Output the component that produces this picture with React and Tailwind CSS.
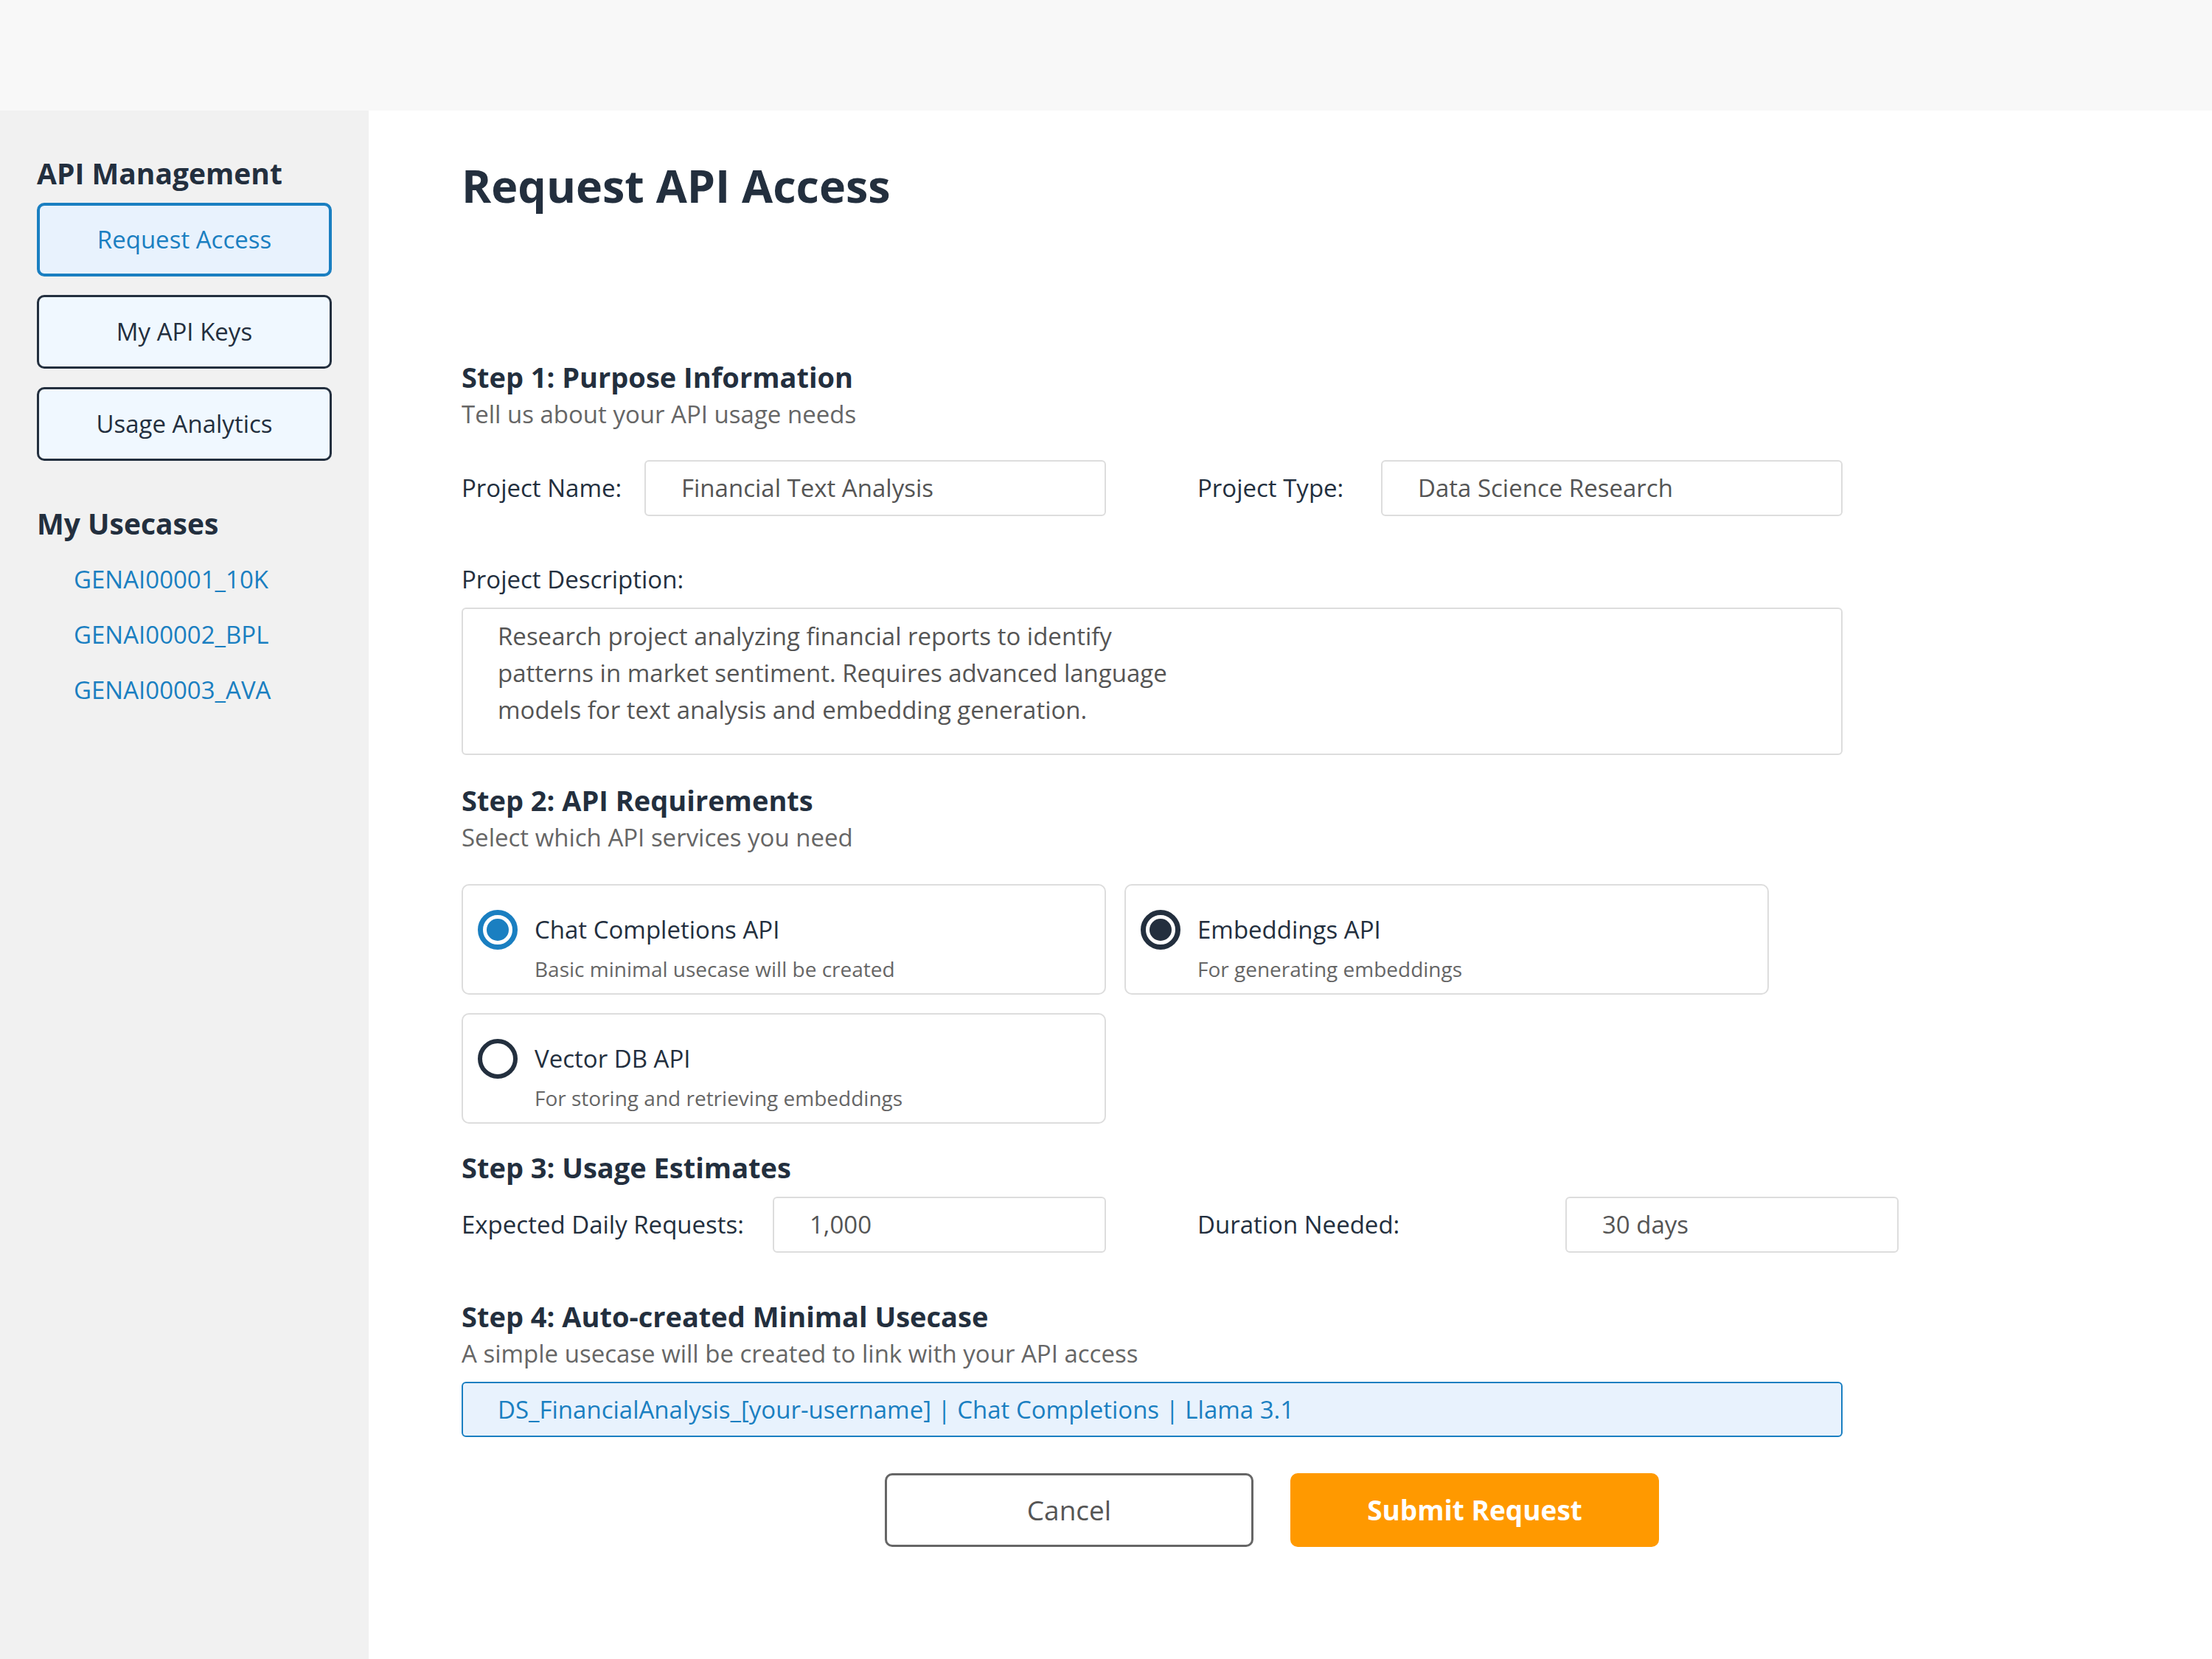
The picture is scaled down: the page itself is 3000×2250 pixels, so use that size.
import { useState } from "react";

const usecases = ["GENAI00001_10K", "GENAI00002_BPL", "GENAI00003_AVA"];

const apis = [
    { id: "chat", title: "Chat Completions API", desc: "Basic minimal usecase will be created", state: "primary" },
    { id: "emb", title: "Embeddings API", desc: "For generating embeddings", state: "checked" },
    { id: "vec", title: "Vector DB API", desc: "For storing and retrieving embeddings", state: "off" },
];

function Radio({ state }) {
    if (state === "primary") {
        return (
            <span className="w-[54px] h-[54px] shrink-0 rounded-full border-[7px] border-[#1a7fc1] flex items-center justify-center">
                <span className="w-[30px] h-[30px] rounded-full bg-[#1a7fc1]" />
            </span>
        );
    }
    if (state === "checked") {
        return (
            <span className="w-[54px] h-[54px] shrink-0 rounded-full border-[7px] border-[#232f3e] flex items-center justify-center">
                <span className="w-[30px] h-[30px] rounded-full bg-[#232f3e]" />
            </span>
        );
    }
    return <span className="w-[54px] h-[54px] shrink-0 rounded-full border-[6px] border-[#232f3e]" />;
}

function SideButton({ label, active }) {
    return (
        <button
            className={
                active
                    ? "w-[400px] h-[100px] rounded-[10px] border-[4px] border-[#1a7fc1] bg-[#e8f2fd] text-[#1a7fc1] text-[33px]"
                    : "w-[400px] h-[100px] rounded-[10px] border-[3px] border-[#232f3e] bg-[#f0f8ff] text-[#232f3e] text-[33px]"
            }
        >
            {label}
        </button>
    );
}

function Field({ value, width }) {
    return (
        <div
            className="h-[76px] border-2 border-[#dddddd] rounded-[6px] px-[48px] flex items-center text-[33px] text-[#555555] bg-white"
            style={{ width }}
        >
            {value}
        </div>
    );
}

function StepHeading({ title, sub, mt }) {
    return (
        <div className={mt}>
            <h3 className="text-[38px] leading-[50px] font-bold text-[#232f3e]">{title}</h3>
            {sub && <p className="mt-[4px] text-[33px] leading-[44px] text-[#666666]">{sub}</p>}
        </div>
    );
}

export default function App() {
    const [selected] = useState("chat");

    return (
        <div className="w-[3000px] h-[2250px] flex flex-col font-['Open_Sans',sans-serif] text-[#232f3e]">
            <header className="h-[150px] shrink-0 bg-[#f8f8f8]" />

            <div className="flex flex-1">
                <aside className="w-[500px] shrink-0 bg-[#f1f1f1] px-[50px] pt-[61px]">
                    <h2 className="text-[39px] leading-[48px] font-bold">API Management</h2>
                    <div className="mt-[16px] flex flex-col gap-[25px]">
                        <SideButton label="Request Access" active />
                        <SideButton label="My API Keys" />
                        <SideButton label="Usage Analytics" />
                    </div>

                    <h2 className="mt-[61px] text-[39px] leading-[48px] font-bold">My Usecases</h2>
                    <ul className="mt-[14px] pl-[50px]">
                        {usecases.map(u => (
                            <li key={u} className="text-[33px] leading-[75px] text-[#1a7fc1]">{u}</li>
                        ))}
                    </ul>
                </aside>

                <main className="flex-1 bg-white pl-[126px] pt-[64px]">
                    <h1 className="text-[61px] leading-[76px] font-bold">Request API Access</h1>

                    <StepHeading mt="mt-[196px]" title="Step 1: Purpose Information" sub="Tell us about your API usage needs" />

                    <div className="mt-[40px] flex items-center">
                        <label className="w-[248px] text-[33px]">Project Name:</label>
                        <Field value="Financial Text Analysis" width="626px" />
                        <label className="ml-[124px] w-[249px] text-[33px]">Project Type:</label>
                        <Field value="Data Science Research" width="626px" />
                    </div>

                    <label className="block mt-[64px] text-[33px] leading-[44px]">Project Description:</label>
                    <div className="mt-[16px] w-[1873px] h-[200px] border-2 border-[#dddddd] rounded-[6px] pl-[47px] pt-[12px] text-[33px] leading-[50px] text-[#555555]">
                        Research project analyzing financial reports to identify<br />
                        patterns in market sentiment. Requires advanced language<br />
                        models for text analysis and embedding generation.
                    </div>

                    <StepHeading mt="mt-[36px]" title="Step 2: API Requirements" sub="Select which API services you need" />

                    <div className="mt-[41px] grid grid-cols-[874px_874px] gap-[25px]">
                        {apis.map(api => (
                            <div
                                key={api.id}
                                className="h-[150px] border-2 border-[#dddddd] rounded-[10px] px-[20px] pt-[33px] bg-white"
                            >
                                <div className="flex items-center gap-[23px]">
                                    <Radio state={api.id === selected ? "primary" : api.state} />
                                    <span className="text-[33px] leading-[44px]">{api.title}</span>
                                </div>
                                <p className="ml-[77px] mt-[8px] text-[28px] leading-[36px] text-[#666666]">{api.desc}</p>
                            </div>
                        ))}
                    </div>

                    <StepHeading mt="mt-[34px]" title="Step 3: Usage Estimates" />

                    <div className="mt-[15px] flex items-center">
                        <label className="w-[422px] text-[33px]">Expected Daily Requests:</label>
                        <Field value="1,000" width="452px" />
                        <label className="ml-[124px] w-[499px] text-[33px]">Duration Needed:</label>
                        <Field value="30 days" width="452px" />
                    </div>

                    <StepHeading mt="mt-[61px]" title="Step 4: Auto-created Minimal Usecase" sub="A simple usecase will be created to link with your API access" />

                    <div className="mt-[16px] w-[1873px] h-[75px] border-2 border-[#1a7fc1] rounded-[6px] bg-[#e8f2fd] pl-[47px] flex items-center text-[33px] text-[#1a7fc1]">
                        DS_FinancialAnalysis_[your-username] | Chat Completions | Llama 3.1
                    </div>

                    <div className="mt-[49px] ml-[574px] flex gap-[50px]">
                        <button className="w-[500px] h-[100px] border-[3px] border-[#666666] rounded-[10px] bg-white text-[37px] text-[#555555]">
                            Cancel
                        </button>
                        <button className="w-[500px] h-[100px] rounded-[10px] bg-[#ff9900] text-[37px] font-bold text-white">
                            Submit Request
                        </button>
                    </div>
                </main>
            </div>
        </div>
    );
}
